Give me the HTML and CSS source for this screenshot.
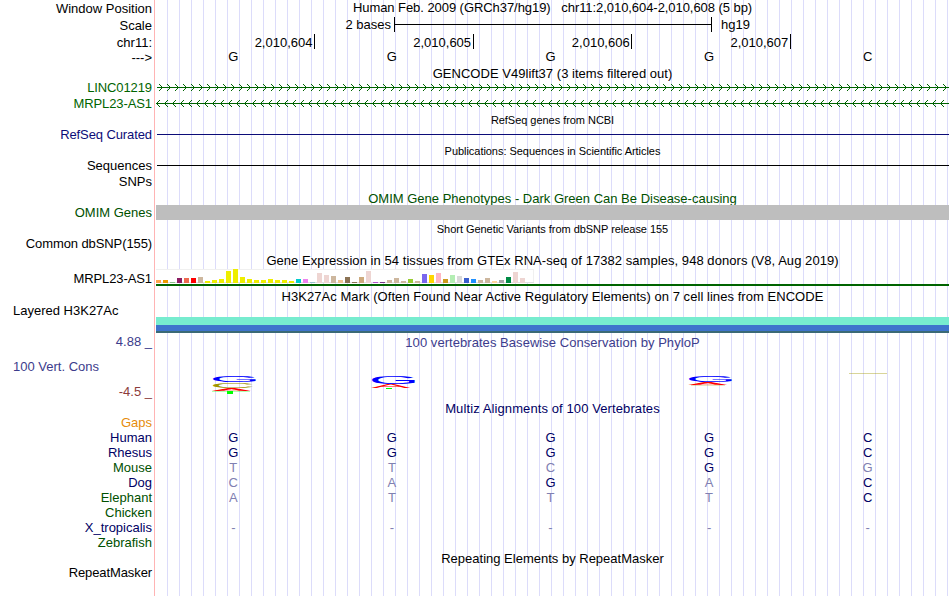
FILE: index.html
```
<!DOCTYPE html>
<html lang="en">
<head>
    <meta charset="UTF-8">
    <title>chr11:2,010,604-2,010,608</title>
    <link rel="stylesheet" href="styles.css">
</head>
<body>
    <div class="browser">
        <div class="labels">
            <div class="position"><span>Window Position</span></div>
            <div class="scaleLabel"><span>Scale</span></div>
            <div class="chrom"><span>chr11:</span></div>
            <div class="strand"><span>---&gt;</span></div>
            <div class="linc green"><span>LINC01219</span></div>
            <div class="mrpl green"><span>MRPL23-AS1</span></div>
            <div class="refseq navy"><span>RefSeq Curated</span></div>
            <div class="sequences"><span>Sequences</span></div>
            <div class="snps"><span>SNPs</span></div>
            <div class="omim darkGreen"><span>OMIM Genes</span></div>
            <div class="dbsnp"><span>Common dbSNP(155)</span></div>
            <div class="gtexLabel"><span>MRPL23-AS1</span></div>
            <div class="layered left"><span>Layered H3K27Ac</span></div>
            <div class="max blue"><span>4.88 _</span></div>
            <div class="cons left blue"><span>100 Vert. Cons</span></div>
            <div class="min red"><span>-4.5 _</span></div>
            <div class="gaps orange"><span>Gaps</span></div>
            <div class="species"><span>Human</span></div>
            <div class="species"><span>Rhesus</span></div>
            <div class="species darkGreen"><span>Mouse</span></div>
            <div class="species"><span>Dog</span></div>
            <div class="species darkGreen"><span>Elephant</span></div>
            <div class="species darkGreen"><span>Chicken</span></div>
            <div class="species"><span>X_tropicalis</span></div>
            <div class="species darkGreen"><span>Zebrafish</span></div>
            <div class="repeat"><span>RepeatMasker</span></div>
        </div>

        <div class="tracks">
            <div class="title windowTitle"><span>Human Feb. 2009 (GRCh37/hg19) &nbsp; chr11:2,010,604-2,010,608 (5 bp)</span></div>
            <div class="scale">
                <span class="bases2">2 bases</span>
                <div class="ruler"><div></div></div>
                <span>hg19</span>
            </div>
            <div class="ticks">
                <div>2,010,604</div>
                <div>2,010,605</div>
                <div>2,010,606</div>
                <div>2,010,607</div>
            </div>
            <div class="bases">
                <i>G</i><i>G</i><i>G</i><i>G</i><i>C</i>
            </div>

            <div class="title gencode"><span>GENCODE V49lift37 (3 items filtered out)</span></div>
            <svg class="gene forward" width="793" height="12" shape-rendering="crispEdges">
                <defs>
                    <pattern id="right" x="3" width="8" height="12" patternUnits="userSpaceOnUse">
                        <path d="M0 2h1v1h1v1h1v1h1v1h-1v1h-1v1h-1v1h-1v-1h1v-1h1v-1h1v-1h-1v-1h-1v-1h-1z" fill="#006400"/>
                    </pattern>
                    <pattern id="left" x="0" width="8" height="12" patternUnits="userSpaceOnUse">
                        <path d="M4 2h-1v1h-1v1h-1v1h-1v1h1v1h1v1h1v1h1v-1h-1v-1h-1v-1h-1v-1h1v-1h1v-1h1z" fill="#006400"/>
                    </pattern>
                </defs>
                <rect x="3" width="790" height="12" fill="url(#right)"/>
                <rect x="1" y="5" width="792" height="1" fill="#006400"/>
            </svg>
            <svg class="gene reverse" width="793" height="12" shape-rendering="crispEdges">
                <rect width="790" height="12" fill="url(#left)"/>
                <rect x="1" y="5" width="792" height="1" fill="#006400"/>
            </svg>

            <div class="title small refseqTitle"><span>RefSeq genes from NCBI</span></div>
            <div class="line navyLine"></div>
            <div class="title small pubs"><span>Publications: Sequences in Scientific Articles</span></div>
            <div class="line"></div>

            <div class="title omimTitle darkGreen"><span>OMIM Gene Phenotypes - Dark Green Can Be Disease-causing</span></div>
            <div class="omimBar"></div>
            <div class="title small snpTitle"><span>Short Genetic Variants from dbSNP release 155</span></div>

            <div class="title gtexTitle"><span>Gene Expression in 54 tissues from GTEx RNA-seq of 17382 samples, 948 donors (V8, Aug 2019)</span></div>
            <div class="gtex">
                <b style="height:3px;background:#ffa54f"></b>
                <b style="height:3px;background:#ee9a00"></b>
                <b style="height:1px;background:#8fbc8f"></b>
                <b style="height:5px;background:#8b1c62"></b>
                <b style="height:5px;background:#ee6a50"></b>
                <b style="height:5px;background:#ff0000"></b>
                <b style="height:6px;background:#cdb79e"></b>
                <b style="height:2px;background:#eeee00"></b>
                <b style="height:3px;background:#eeee00"></b>
                <b style="height:4px;background:#eeee00"></b>
                <b style="height:12px;background:#eeee00"></b>
                <b style="height:14px;background:#eeee00"></b>
                <b style="height:6px;background:#eeee00"></b>
                <b style="height:4px;background:#eeee00"></b>
                <b style="height:3px;background:#eeee00"></b>
                <b style="height:3px;background:#eeee00"></b>
                <b style="height:4px;background:#eeee00"></b>
                <b style="height:3px;background:#eeee00"></b>
                <b style="height:3px;background:#eeee00"></b>
                <b style="height:2px;background:#eeee00"></b>
                <b style="height:4px;background:#00cdcd"></b>
                <b style="height:4px;background:#ee82ee"></b>
                <b style="height:1px;background:#9ac0cd"></b>
                <b style="height:10px;background:#eed5d2"></b>
                <b style="height:8px;background:#eed5d2"></b>
                <b style="height:7px;background:#cdb79e"></b>
                <b style="height:3px;background:#eec591"></b>
                <b style="height:6px;background:#8b7355"></b>
                <b style="height:1px;background:#8b7355"></b>
                <b style="height:6px;background:#cdaa7d"></b>
                <b style="height:12px;background:#eed5d2"></b>
                <b style="height:1px;background:#b452cd"></b>
                <b style="height:1px;background:#7a378b"></b>
                <b style="height:3px;background:#cdb79e"></b>
                <b style="height:5px;background:#cdb79e"></b>
                <b style="height:2px;background:#cdb79e"></b>
                <b style="height:4px;background:#9acd32"></b>
                <b style="height:2px;background:#cdb79e"></b>
                <b style="height:9px;background:#7a67ee"></b>
                <b style="height:8px;background:#ffd700"></b>
                <b style="height:10px;background:#ffb6c1"></b>
                <b style="height:4px;background:#cd9b1d"></b>
                <b style="height:8px;background:#b4eeb4"></b>
                <b style="height:7px;background:#d9d9d9"></b>
                <b style="height:5px;background:#3a5fcd"></b>
                <b style="height:4px;background:#1e90ff"></b>
                <b style="height:3px;background:#cdb79e"></b>
                <b style="height:5px;background:#cdb79e"></b>
                <b style="height:2px;background:#ffd39b"></b>
                <b style="height:3px;background:#a6a6a6"></b>
                <b style="height:6px;background:#008b45"></b>
                <b style="height:11px;background:#eed5d2"></b>
                <b style="height:5px;background:#eed5d2"></b>
            </div>
            <div class="gtexGene"></div>

            <div class="title h3kTitle"><span>H3K27Ac Mark (Often Found Near Active Regulatory Elements) on 7 cell lines from ENCODE</span></div>
            <div class="h3k"></div>

            <div class="title phylo blue"><span>100 vertebrates Basewise Conservation by PhyloP</span></div>
            <!-- sequence logo, letters stretched to the base width -->
            <svg class="logo" width="795" height="30">
                <g class="letters">
                    <text transform="translate(55.8 12) scale(6.5 .9)" fill="#0000ff">G</text>
                    <text transform="translate(55.8 18) scale(6.3 .8)" fill="#a09600">C</text>
                    <text transform="translate(57.8 21) scale(5.9 .4)" fill="#ff0000">A</text>
                    <rect x="58" y="21" width="38" height="1" fill="#00ff00" opacity=".3"/>
                    <rect x="73" y="21" width="6" height="3" fill="#00ff00"/>

                    <text transform="translate(214.8 13.8) scale(6.5 1.05)" fill="#0000ff">G</text>
                    <text transform="translate(217 17.8) scale(5.9 .48)" fill="#ff0000">A</text>
                    <rect x="232" y="18" width="6" height="1" fill="#00ff00"/>

                    <text transform="translate(531.8 12) scale(6.5 .9)" fill="#0000ff">G</text>
                    <text transform="translate(534 15) scale(5.9 .4)" fill="#ff0000">A</text>
                    <rect x="537" y="15" width="34" height="1" fill="#a09600" opacity=".25"/>
                </g>
                <rect x="695" y="3" width="38" height="1" fill="#a09600" opacity=".4"/>
            </svg>

            <div class="title multiz"><span>Multiz Alignments of 100 Vertebrates</span></div>
            <div class="alignment">
                <div class="bases"><i>G</i><i>G</i><i>G</i><i>G</i><i>C</i></div>
                <div class="bases"><i>G</i><i>G</i><i>G</i><i>G</i><i>C</i></div>
                <div class="bases"><i class="diff">T</i><i class="diff">T</i><i class="diff">C</i><i>G</i><i class="diff">G</i></div>
                <div class="bases"><i class="diff">C</i><i class="diff">A</i><i>G</i><i class="diff">A</i><i>C</i></div>
                <div class="bases"><i class="diff">A</i><i class="diff">T</i><i class="diff">T</i><i class="diff">T</i><i>C</i></div>
                <div class="bases"></div>
                <div class="bases"><i class="diff">-</i><i class="diff">-</i><i class="diff">-</i><i class="diff">-</i><i class="diff">-</i></div>
                <div class="bases"></div>
            </div>
            <div class="title repeatTitle"><span>Repeating Elements by RepeatMasker</span></div>
        </div>
    </div>
</body>
</html>
```
FILE: styles.css
```
body {
    margin: 0;
    background-color: #fff;
    font: 13px/15px "Liberation Sans", Arial, sans-serif;
    color: #000;
}
.browser {
    width: 949px;
    height: 596px;
    display: flex;
    overflow: hidden;
}
.labels {
    width: 152px;
    padding-right: 2px;
    text-align: right;
}
.labels div {
    height: 15px;
    white-space: nowrap;
}
.labels .left {
    text-align: left;
    padding-left: 13px;
}
.position { margin-top: 1px; }
.scaleLabel, .chrom { margin-top: 2px; }
.linc { margin-top: 15px; }
.mrpl { margin-top: 1px; }
.refseq, .sequences { margin-top: 16px; }
.snps { margin-top: 1px; }
.omim, .dbsnp { margin-top: 16px; }
.gtexLabel { margin-top: 20px; }
.layered { margin-top: 17px; }
.max { margin-top: 16px; }
.cons, .min { margin-top: 10px; }
.gaps { margin-top: 16px; }
.repeat { margin-top: 15px; }
.species { color: #000064; }
.linc, .mrpl, .refseq, .dbsnp, .gtexLabel, .repeat { letter-spacing: -.1px; }

.green { color: #006400; }
.labels .darkGreen, .darkGreen { color: #005000; }
.navy { color: #0c0c78; }
.blue { color: #3c3c8c; }
.red { color: #8c3c3c; }
.orange { color: #e68c0a; }

.tracks {
    width: 795px;
    background:
        linear-gradient(#ffb4b4, #ffb4b4) 0 0 / 1px 100% no-repeat,
        repeating-linear-gradient(to right, #dcdcfa 0 1px, transparent 1px 12px) 13px 0 no-repeat;
}
.title {
    height: 15px;
    padding-left: 2px;
    text-align: center;
    white-space: nowrap;
}
.small {
    height: 12px;
    font-size: 11px;
    line-height: 12px;
    letter-spacing: -.04px;
}
.windowTitle { letter-spacing: -.06px; }

.scale {
    display: flex;
    height: 16px;
    margin-top: 2px;
}
.bases2 {
    width: 237px;
    text-align: right;
}
.ruler {
    width: 316px;
    height: 15px;
    margin: 0 9px 0 3px;
    border: solid #000;
    border-width: 0 1px;
}
.ruler div {
    height: 1px;
    margin-top: 7px;
    background-color: #000;
}
.ticks {
    display: flex;
    height: 15px;
    margin-top: 1px;
    padding-left: 2.4px;
    line-height: 17px;
}
.ticks div {
    box-sizing: border-box;
    width: 158.6px;
    padding-right: 1.5px;
    border-right: 1px solid #000;
    text-align: right;
}
.bases {
    display: flex;
    height: 15px;
    width: 793px;
}
.bases i {
    width: 158.6px;
    font-style: normal;
    text-align: center;
}

.gencode {
    margin-top: 2px;
    letter-spacing: .03px;
}
.gene {
    display: block;
    margin-left: 2px;
}
.forward { margin-top: 1px; }
.reverse { margin-top: 4px; }
.refseqTitle { margin-top: 4px; }
.line {
    height: 1px;
    margin: 8px 0 0 3px;
    background-color: #000;
}
.navyLine { background-color: #0c0c78; }
.pubs { margin-top: 10px; }

.omimTitle {
    height: 14px;
    margin-top: 25px;
}
.omimBar {
    position: relative;
    height: 15px;
    margin-left: 2px;
    background-color: #bebebe;
}
.snpTitle { margin-top: 3px; }

.gtexTitle {
    margin-top: 18px;
    letter-spacing: .055px;
}
.gtex {
    box-sizing: border-box;
    display: flex;
    align-items: flex-end;
    gap: 2px;
    width: 378px;
    height: 14px;
    margin: 1px 0 0 2px;
    background:
        linear-gradient(#f0f0f0, #f0f0f0) 0 0 / 100% 1px no-repeat,
        linear-gradient(#e0e0e0, #e0e0e0) 0 100% / 100% 1px no-repeat,
        linear-gradient(#f0f0f0, #f0f0f0) 100% 0 / 1px 100% no-repeat,
        #fff;
}
.gtex b {
    width: 5px;
}
.gtexGene {
    height: 2px;
    margin: 1px 0 0 2px;
    background-color: #006400;
}

.h3kTitle {
    margin-top: 3px;
    letter-spacing: .05px;
}
.h3k {
    height: 16px;
    margin: 13px 0 0 2px;
    background: linear-gradient(#77eccf 0 8px, #3e74cc 8px 14px, #3b6a75 14px);
}
.phylo {
    margin-top: 2px;
    letter-spacing: .05px;
}
.logo {
    display: block;
    margin-top: 20px;
}
.letters {
    font-size: 10px;
}

.multiz {
    margin-top: 1px;
    color: #000064;
    letter-spacing: .1px;
}
.alignment {
    margin-top: 14px;
    color: #000064;
}
.diff { color: #8080b1; }
.repeatTitle { margin-top: 1px; }
```
